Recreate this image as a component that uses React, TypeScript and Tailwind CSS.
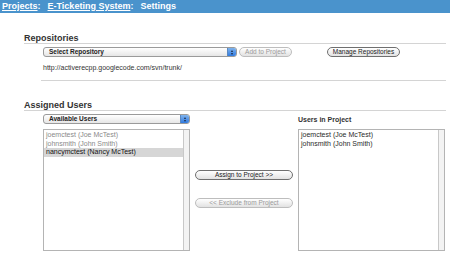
const font = { fontFamily: '"Liberation Sans", Arial, sans-serif' }

const Select = ({ label, width }: { label: string; width: string }) => (
  <div
    className={`${width} h-[10px] flex items-center rounded-[3px] border border-[#9a9a9a] bg-gradient-to-b from-white to-[#e6e6e6] overflow-hidden`}
  >
    <span className="flex-1 pl-[5px] text-[6.5px] font-bold leading-[8px] text-[#222]">{label}</span>
    <span className="w-[9px] h-full flex flex-col items-center justify-center gap-[1px] bg-gradient-to-b from-[#7fb3ec] to-[#2f7ae0] border-l border-[#5a88c0]">
      <span className="block w-0 h-0 border-l-[1.5px] border-r-[1.5px] border-b-[2px] border-l-transparent border-r-transparent border-b-[#1b2a44]" />
      <span className="block w-0 h-0 border-l-[1.5px] border-r-[1.5px] border-t-[2px] border-l-transparent border-r-transparent border-t-[#1b2a44]" />
    </span>
  </div>
)

const Button = ({ label, width, disabled }: { label: string; width: string; disabled?: boolean }) => (
  <div
    className={`${width} h-[10px] flex items-center justify-center rounded-full border bg-gradient-to-b from-white to-[#e2e2e2] text-[6.5px] leading-[8px] ${
      disabled ? 'border-[#bdbdbd] text-[#9a9a9a]' : 'border-[#6f6f6f] text-[#222]'
    }`}
  >
    {label}
  </div>
)

const ListBox = ({ items, selected, muted }: { items: string[]; selected?: number; muted?: boolean }) => (
  <div className="w-[147px] h-[122px] flex border border-[#b4b4b4] bg-white">
    <div className="flex-1 pt-[1px] flex flex-col">
      {items.map((item, i) => (
        <div
          key={item}
          className={`h-[8.7px] pl-[2px] text-[7px] leading-[8.7px] whitespace-nowrap ${
            i === selected ? 'bg-[#d6d6d6] text-[#111]' : muted ? 'text-[#8a8a8a]' : 'text-[#2a2a2a]'
          }`}
        >
          {item}
        </div>
      ))}
    </div>
    <div className="w-[6px] border-l border-[#c8c8c8] bg-[#f3f3f3]" />
  </div>
)

export default function App() {
  return (
    <div className="w-[450px] h-[259px] bg-white overflow-hidden" style={font}>
      <div className="h-[13px] bg-[#4a93cc] pl-[2px] flex items-center gap-[7px] text-[9px] font-bold leading-[13px] text-white">
        <span><span className="underline">Projects</span>:</span>
        <span><span className="underline">E-Ticketing System</span>:</span>
        <span>Settings</span>
      </div>

      <div className="pl-[24px] pr-[4px]">
        <div className="mt-[19px] h-[12px] border-b border-[#d4d4d4] text-[9px] font-bold leading-[12px] text-[#333]">
          Repositories
        </div>
        <div className="mt-[3px] ml-[19px] flex items-center">
          <Select label="Select Repository" width="w-[194px]" />
          <div className="ml-[2px]">
            <Button label="Add to Project" width="w-[53px]" disabled />
          </div>
          <div className="ml-[35px]">
            <Button label="Manage Repositories" width="w-[73px]" />
          </div>
        </div>
        <div className="mt-[6px] ml-[19px] h-[10px] text-[7px] leading-[10px] text-[#333]">
          http://activerecpp.googlecode.com/svn/trunk/
        </div>
        <div className="mt-[7px] ml-[17px] border-t border-[#d4d4d4]" />

        <div className="mt-[18px] h-[12px] border-b border-[#d4d4d4] text-[9px] font-bold leading-[12px] text-[#333]">
          Assigned Users
        </div>
        <div className="mt-[3px] ml-[19px] flex items-end">
          <Select label="Available Users" width="w-[147px]" />
          <div className="ml-[108px] text-[7px] font-bold leading-[8px] text-[#333]">Users in Project</div>
        </div>
        <div className="mt-[5px] ml-[19px] flex">
          <ListBox
            items={['joemctest (Joe McTest)', 'johnsmith (John Smith)', 'nancymctest (Nancy McTest)']}
            selected={2}
            muted
          />
          <div className="w-[108px] pl-[5px] pt-[41px] flex flex-col gap-[18px]">
            <Button label="Assign to Project >>" width="w-[98px]" />
            <Button label="<< Exclude from Project" width="w-[98px]" disabled />
          </div>
          <ListBox items={['joemctest (Joe McTest)', 'johnsmith (John Smith)']} />
        </div>
      </div>
    </div>
  )
}
